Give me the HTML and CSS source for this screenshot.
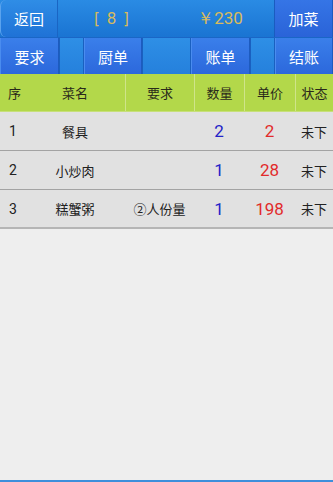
FILE: index.html
```html
<!DOCTYPE html>
<html lang="zh">
<head>
<meta charset="utf-8">
<link rel="stylesheet" href="styles.css">
</head>
<body>
<div class="page">
  <div class="topbar">
    <div class="btn back">返回</div>
    <div class="info"><span class="count">[ 8 ]</span></div>
    <div class="info"><span class="total">￥230</span></div>
    <div class="btn add">加菜</div>
  </div>
  <div class="actions">
    <div class="btn">要求</div>
    <div class="gap"></div>
    <div class="btn">厨单</div>
    <div class="gap"></div>
    <div class="btn">账单</div>
    <div class="gap"></div>
    <div class="btn">结账</div>
  </div>
  <div class="table">
    <div class="row head">
      <div class="c left">序</div>
      <div class="c">菜名</div>
      <div class="c sep">要求</div>
      <div class="c sep">数量</div>
      <div class="c sep">单价</div>
      <div class="c sep">状态</div>
    </div>
    <div class="row">
      <div class="c left num">1</div>
      <div class="c">餐具</div>
      <div class="c"></div>
      <div class="c qty">2</div>
      <div class="c price">2</div>
      <div class="c">未下</div>
    </div>
    <div class="row">
      <div class="c left num">2</div>
      <div class="c">小炒肉</div>
      <div class="c"></div>
      <div class="c qty">1</div>
      <div class="c price">28</div>
      <div class="c">未下</div>
    </div>
    <div class="row last">
      <div class="c left num">3</div>
      <div class="c">糕蟹粥</div>
      <div class="c">②人份量</div>
      <div class="c qty">1</div>
      <div class="c price">198</div>
      <div class="c">未下</div>
    </div>
  </div>
  <div class="spacer"></div>
  <div class="bottomline"></div>
</div>
</body>
</html>
```

FILE: styles.css
```css
html, body {
  margin: 0;
  padding: 0;
  background: #eeeeee;
}
body {
  font-family: "Noto Sans CJK SC", "Noto Sans", Roboto, sans-serif;
  color: #222;
}
.page {
  width: 333px;
  height: 482px;
  display: flex;
  flex-direction: column;
  overflow: hidden;
}
.topbar {
  height: 37px;
  display: grid;
  grid-template-columns: 58px 108px 108px 59px;
  background: linear-gradient(#2a8be4, #1a74d2);
}
.btn {
  display: flex;
  align-items: center;
  justify-content: center;
  color: #ffffff;
  font-size: 15px;
  background: linear-gradient(#3a7fea, #2c68dc);
  border-right: 1px solid #1d5bbf;
  border-left: 1px solid #4a8cef;
  box-sizing: border-box;
}
.topbar .back {
  background: linear-gradient(#2f8de6, #1f72d6);
  border-radius: 6px 0 0 6px;
  border-left: 1px solid #5aa3ee;
  border-right: 1px solid #1a65c4;
}
.topbar .add {
  background: linear-gradient(#3575e6, #2a63d8);
  border-left: 1px solid #1a5cc0;
}
.info {
  display: flex;
  align-items: center;
  justify-content: center;
  color: #d9bb5c;
  font-size: 16px;
}
.count {
  letter-spacing: 1px;
  font-family: "DejaVu Sans", sans-serif;
  font-size: 15px;
}
.total {
  font-family: Roboto, "Noto Sans", sans-serif;
  font-size: 17px;
}
.actions {
  height: 37px;
  display: grid;
  grid-template-columns: 59px 25px 58px 49px 59px 25px 58px;
  background: #2a88e0;
  border-top: 1px solid #1a66c6;
  box-sizing: border-box;
}
.gap {
  background: linear-gradient(#2e8fe6, #2580dc);
  border-left: 1px solid #1a60c0;
  border-right: 1px solid #1a60c0;
}
.table {
  display: flex;
  flex-direction: column;
}
.row {
  display: grid;
  grid-template-columns: 25px 100px 69px 50px 51px 38px;
  height: 39px;
  background: #e1e1e1;
  border-bottom: 1px solid #a3a3a3;
  box-sizing: border-box;
}
.row.head {
  height: 38px;
  background: #b3d84a;
  border-bottom: 1px solid #c7e07a;
}
.row.last {
  border-bottom: 2px solid #b5b5b5;
}
.c {
  display: flex;
  align-items: center;
  justify-content: center;
  font-size: 13px;
  color: #222;
  white-space: nowrap;
}
.c.left {
  justify-content: flex-start;
  padding-left: 8px;
}
.c.num {
  font-family: Roboto, sans-serif;
  font-size: 14px;
  padding-left: 9px;
}
.head .c {
  font-size: 13px;
  color: #2a2a1a;
}
.head .sep {
  border-left: 1px solid #cfe48a;
}
.qty {
  color: #2323c8;
  font-family: Roboto, sans-serif;
  font-size: 17px !important;
}
.price {
  color: #e12b2b;
  font-family: Roboto, sans-serif;
  font-size: 17px !important;
}
.spacer {
  flex: 1;
}
.bottomline {
  height: 2px;
  background: #3d8fdc;
}
```
